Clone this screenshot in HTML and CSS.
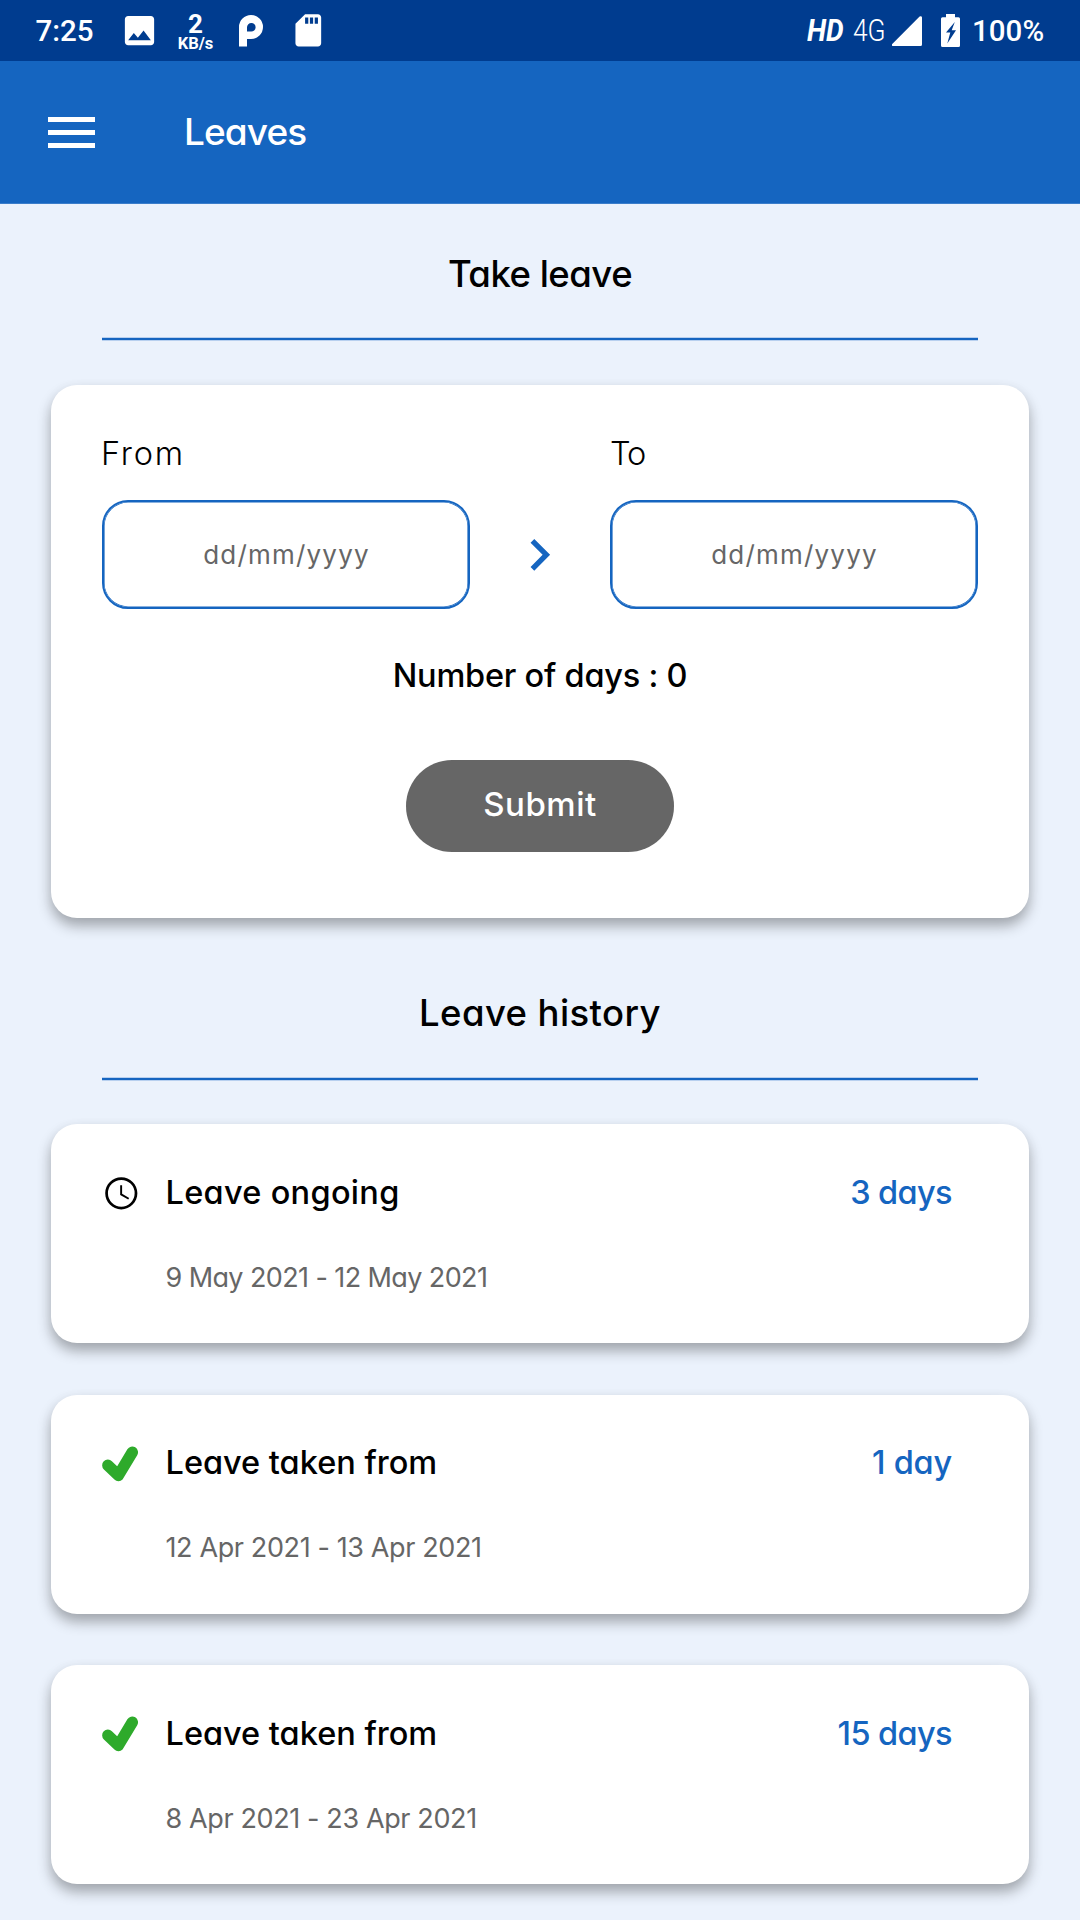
FILE: index.html
```html
<!DOCTYPE html>
<html lang="en">
<head>
<meta charset="utf-8">
<title>Leaves</title>
<link rel="stylesheet" href="styles.css">
</head>
<body>
<div class="statusbar">
  <span class="status-time">7:25</span>
  <svg class="status-image" viewBox="0 0 24 24"><path d="M21 19V5c0-1.1-.9-2-2-2H5c-1.1 0-2 .9-2 2v14c0 1.1.9 2 2 2h14c1.1 0 2-.9 2-2zM8.500 13.500l2.500 3.010L14.500 12l4.500 6H5l3.500-4.500z"/></svg>
  <div class="status-speed"><span class="speed-value">2</span><span class="speed-unit">KB/s</span></div>
  <svg class="status-p" viewBox="0 0 24 32"><path fill-rule="evenodd" d="M0 31.500V12a12 12 0 1 1 12 12H8v7.500zM8 16.500h4a4.300 4.300 0 1 0-4-4.300z"/></svg>
  <svg class="status-sd" viewBox="0 0 24 24"><path d="M18 2h-8L4.020 8 4 20c0 1.100.9 2 2 2h12c1.100 0 2-.9 2-2V4c0-1.100-.9-2-2-2zm-6 6h-2V4h2v4zm3 0h-2V4h2v4zm3 0h-2V4h2v4z"/></svg>
  <span class="status-hd">HD</span>
  <span class="status-net">4G</span>
  <svg class="status-signal" viewBox="0 0 30 30"><path d="M30 1.500V28.500a1.500 1.500 0 0 1-1.500 1.500H1.500a1.200 1.200 0 0 1-1-2.200L27.600.6a1.400 1.400 0 0 1 2.400.9z"/></svg>
  <svg class="status-battery" viewBox="0 0 19 33"><path fill-rule="evenodd" d="M5 0h9v3.300h3.500A1.500 1.500 0 0 1 19 4.800v26.700a1.500 1.500 0 0 1-1.500 1.500h-16A1.500 1.500 0 0 1 0 31.500V4.800a1.500 1.500 0 0 1 1.500-1.500H5zM13.800 8L5 18.500h4.300L6.300 29.500 15 16.200h-4.300z"/></svg>
  <span class="status-percent">100%</span>
</div>

<header class="appbar">
  <div class="menu"><i></i><i></i><i></i></div>
  <h1 class="appbar-title">Leaves</h1>
</header>

<main class="content">
  <h2 class="section-title">Take leave</h2>

  <section class="card form-card">
    <div class="dates">
      <label class="field">
        <span class="field-label field-label--from">From</span>
        <span class="field-input">dd/mm/yyyy</span>
      </label>
      <svg class="chevron" viewBox="8 6 8 12"><path d="M10 6L8.590 7.410 13.170 12l-4.580 4.590L10 18l6-6z"/></svg>
      <label class="field">
        <span class="field-label field-label--to">To</span>
        <span class="field-input">dd/mm/yyyy</span>
      </label>
    </div>
    <p class="total">Number of days : 0</p>
    <button class="submit" type="button">Submit</button>
  </section>

  <h2 class="section-title section-title--history">Leave history</h2>

  <div class="history">
    <article class="card leave">
      <svg class="leave-icon" viewBox="0 0 24 24"><path d="M11.990 2C6.470 2 2 6.480 2 12s4.470 10 9.990 10C17.520 22 22 17.520 22 12S17.520 2 11.990 2zM12 20.300A8.300 8.300 0 1 1 12 3.700a8.300 8.300 0 0 1 0 16.600z"/><path d="M12.500 7H11.300v6l5 2.900.6-1-4.400-2.600z"/></svg>
      <h3 class="leave-title leave-title--ongoing">Leave ongoing</h3>
      <span class="leave-days">3 days</span>
      <p class="leave-dates">9 May 2021 - 12 May 2021</p>
    </article>
    <article class="card leave">
      <svg class="leave-icon" viewBox="0 0 38.600 38.600"><path class="tick" d="M5.900 20.300L16.400 30.400 30.300 7.300"/></svg>
      <h3 class="leave-title">Leave taken from</h3>
      <span class="leave-days leave-days--one">1 day</span>
      <p class="leave-dates leave-dates--apr">12 Apr 2021 - 13 Apr 2021</p>
    </article>
    <article class="card leave">
      <svg class="leave-icon" viewBox="0 0 38.600 38.600"><path class="tick" d="M5.900 20.300L16.400 30.400 30.300 7.300"/></svg>
      <h3 class="leave-title">Leave taken from</h3>
      <span class="leave-days">15 days</span>
      <p class="leave-dates leave-dates--apr">8 Apr 2021 - 23 Apr 2021</p>
    </article>
  </div>
</main>
</body>
</html>
```
FILE: styles.css
```css
* { box-sizing: border-box; margin: 0; padding: 0; }

body {
  width: 1080px;
  height: 1920px;
  overflow: hidden;
  background: #ebf2fc;
  color: #000;
  font-family: Inter, "Open Sans", sans-serif;
  font-feature-settings: "cv11";
}

svg { display: block; flex: none; }

/* Status bar */
.statusbar {
  display: flex;
  align-items: center;
  height: 61px;
  padding-left: 35.5px;
  background: #003c8f;
  color: #fff;
  fill: #fff;
  font: 500 29.5px/1 Roboto, sans-serif;
  white-space: nowrap;
}
.status-time { width: 84.6px; margin-top: 3px; }
.status-image { width: 39px; height: 39px; }
.status-speed {
  display: flex;
  flex-direction: column;
  align-items: center;
  width: 36px;
  margin-left: 18.400px;
  font-weight: 700;
}
.speed-value { font-size: 26px; line-height: 22px; padding-top: 4px; }
.speed-unit { font-size: 16.5px; line-height: 17px; }
.status-p { width: 24px; height: 32px; margin-left: 26px; }
.status-sd { width: 38.6px; height: 38.6px; margin-left: 25.500px; }
.status-hd {
  width: 46px;
  margin-left: 479.500px;
  margin-top: -1px;
  font-size: 31px;
  font-style: italic;
  font-weight: 700;
  transform: scaleX(.9);
  transform-origin: left;
}
.status-net {
  width: 39px;
  font-size: 31px;
  font-weight: 350;
  transform: scaleX(.85);
  transform-origin: left;
}
.status-signal { width: 30px; height: 30px; margin-top: 1px; }
.status-battery { width: 19px; height: 33px; margin-left: 19px; }
.status-percent { margin: 3px 0 0 12px; }

/* App bar */
.appbar {
  display: flex;
  align-items: center;
  height: 143px;
  padding-left: 48px;
  background: #1565c0;
  border-bottom: 1px solid #3a7dca;
  color: #fff;
}
.menu { display: flex; flex-direction: column; gap: 8px; width: 47px; }
.menu i { height: 5px; background: #fff; }
.appbar-title {
  margin: -1px 0 0 89px;
  font-size: 37px;
  font-weight: 450;
  letter-spacing: -.9px;
}

.content { padding: 0 51px; }

.section-title {
  height: 137px;
  margin: 0 51px;
  font-size: 36.5px;
  font-weight: 450;
  line-height: 140px;
  letter-spacing: -.5px;
  text-align: center;
  background: linear-gradient(#b8d0ef 1px, #1565c0 1px 3px, #b8d0ef 3px) bottom / 100% 4px no-repeat;
}
.section-title--history {
  height: 163px;
  line-height: 191px;
  letter-spacing: .4px;
}

.card {
  background: #fff;
  border-radius: 26px;
  box-shadow: 0 8px 14px rgba(0, 0, 0, .3), 0 3px 14px rgba(0, 0, 0, .04);
}

/* Leave request form */
.form-card {
  display: flex;
  flex-direction: column;
  align-items: center;
  height: 533px;
  margin-top: 44px;
  padding: 44px 51px 0;
}
.dates { display: flex; justify-content: space-between; width: 100%; }
.field { display: flex; flex-direction: column; gap: 21px; width: 368px; }
.field-label { font-size: 32.5px; font-weight: 300; line-height: 50px; }
.field-label--from { letter-spacing: 1.8px; margin-left: -1px; }
.field-label--to { letter-spacing: -1px; }
.field-input {
  height: 109px;
  border: 2px solid #1565c0;
  border-radius: 26px;
  box-shadow: inset 0 0 0 .6px #1565c0;
  color: #666;
  font-size: 26px;
  letter-spacing: 1.2px;
  line-height: 106px;
  padding-left: 1px;
  text-align: center;
}
.chevron { width: 21.1px; height: 31.700px; margin-top: 110px; fill: #1565c0; }
.total { margin-top: 47px; font-size: 32.5px; font-weight: 450; line-height: 40px; letter-spacing: -.22px; }
.submit {
  width: 268px;
  height: 92px;
  margin-top: 64px;
  padding-bottom: 4px;
  border: 0;
  border-radius: 46px;
  background: #666;
  color: #fff;
  font: inherit;
  font-feature-settings: inherit;
  font-size: 33px;
  font-weight: 450;
  letter-spacing: .5px;
}

/* Leave history */
.history { display: flex; flex-direction: column; gap: 51.5px; margin-top: 43px; }
.leave {
  display: grid;
  grid-template: 56px 80px / 63.500px 1fr auto;
  align-items: center;
  height: 219px;
  padding: 40px 77px 0 51px;
}
.leave-icon { width: 38.6px; height: 38.600px; margin-top: 3px; }
.tick {
  fill: none;
  stroke: #2eaa2b;
  stroke-width: 11.500px;
  stroke-linecap: round;
  stroke-linejoin: round;
}
.leave-title { font-size: 32.5px; font-weight: 450; }
.leave-title--ongoing { letter-spacing: .3px; }
.leave-days {
  color: #1565c0;
  font-size: 32.5px;
  font-weight: 450;
  letter-spacing: -.6px;
}
.leave-days--one { letter-spacing: -.2px; }
.leave-dates {
  grid-column: 2 / 4;
  padding-top: 35px;
  color: #666;
  font-size: 27px;
  line-height: 34px;
  letter-spacing: -.6px;
}
.leave-dates--apr { letter-spacing: -.38px; }
```
